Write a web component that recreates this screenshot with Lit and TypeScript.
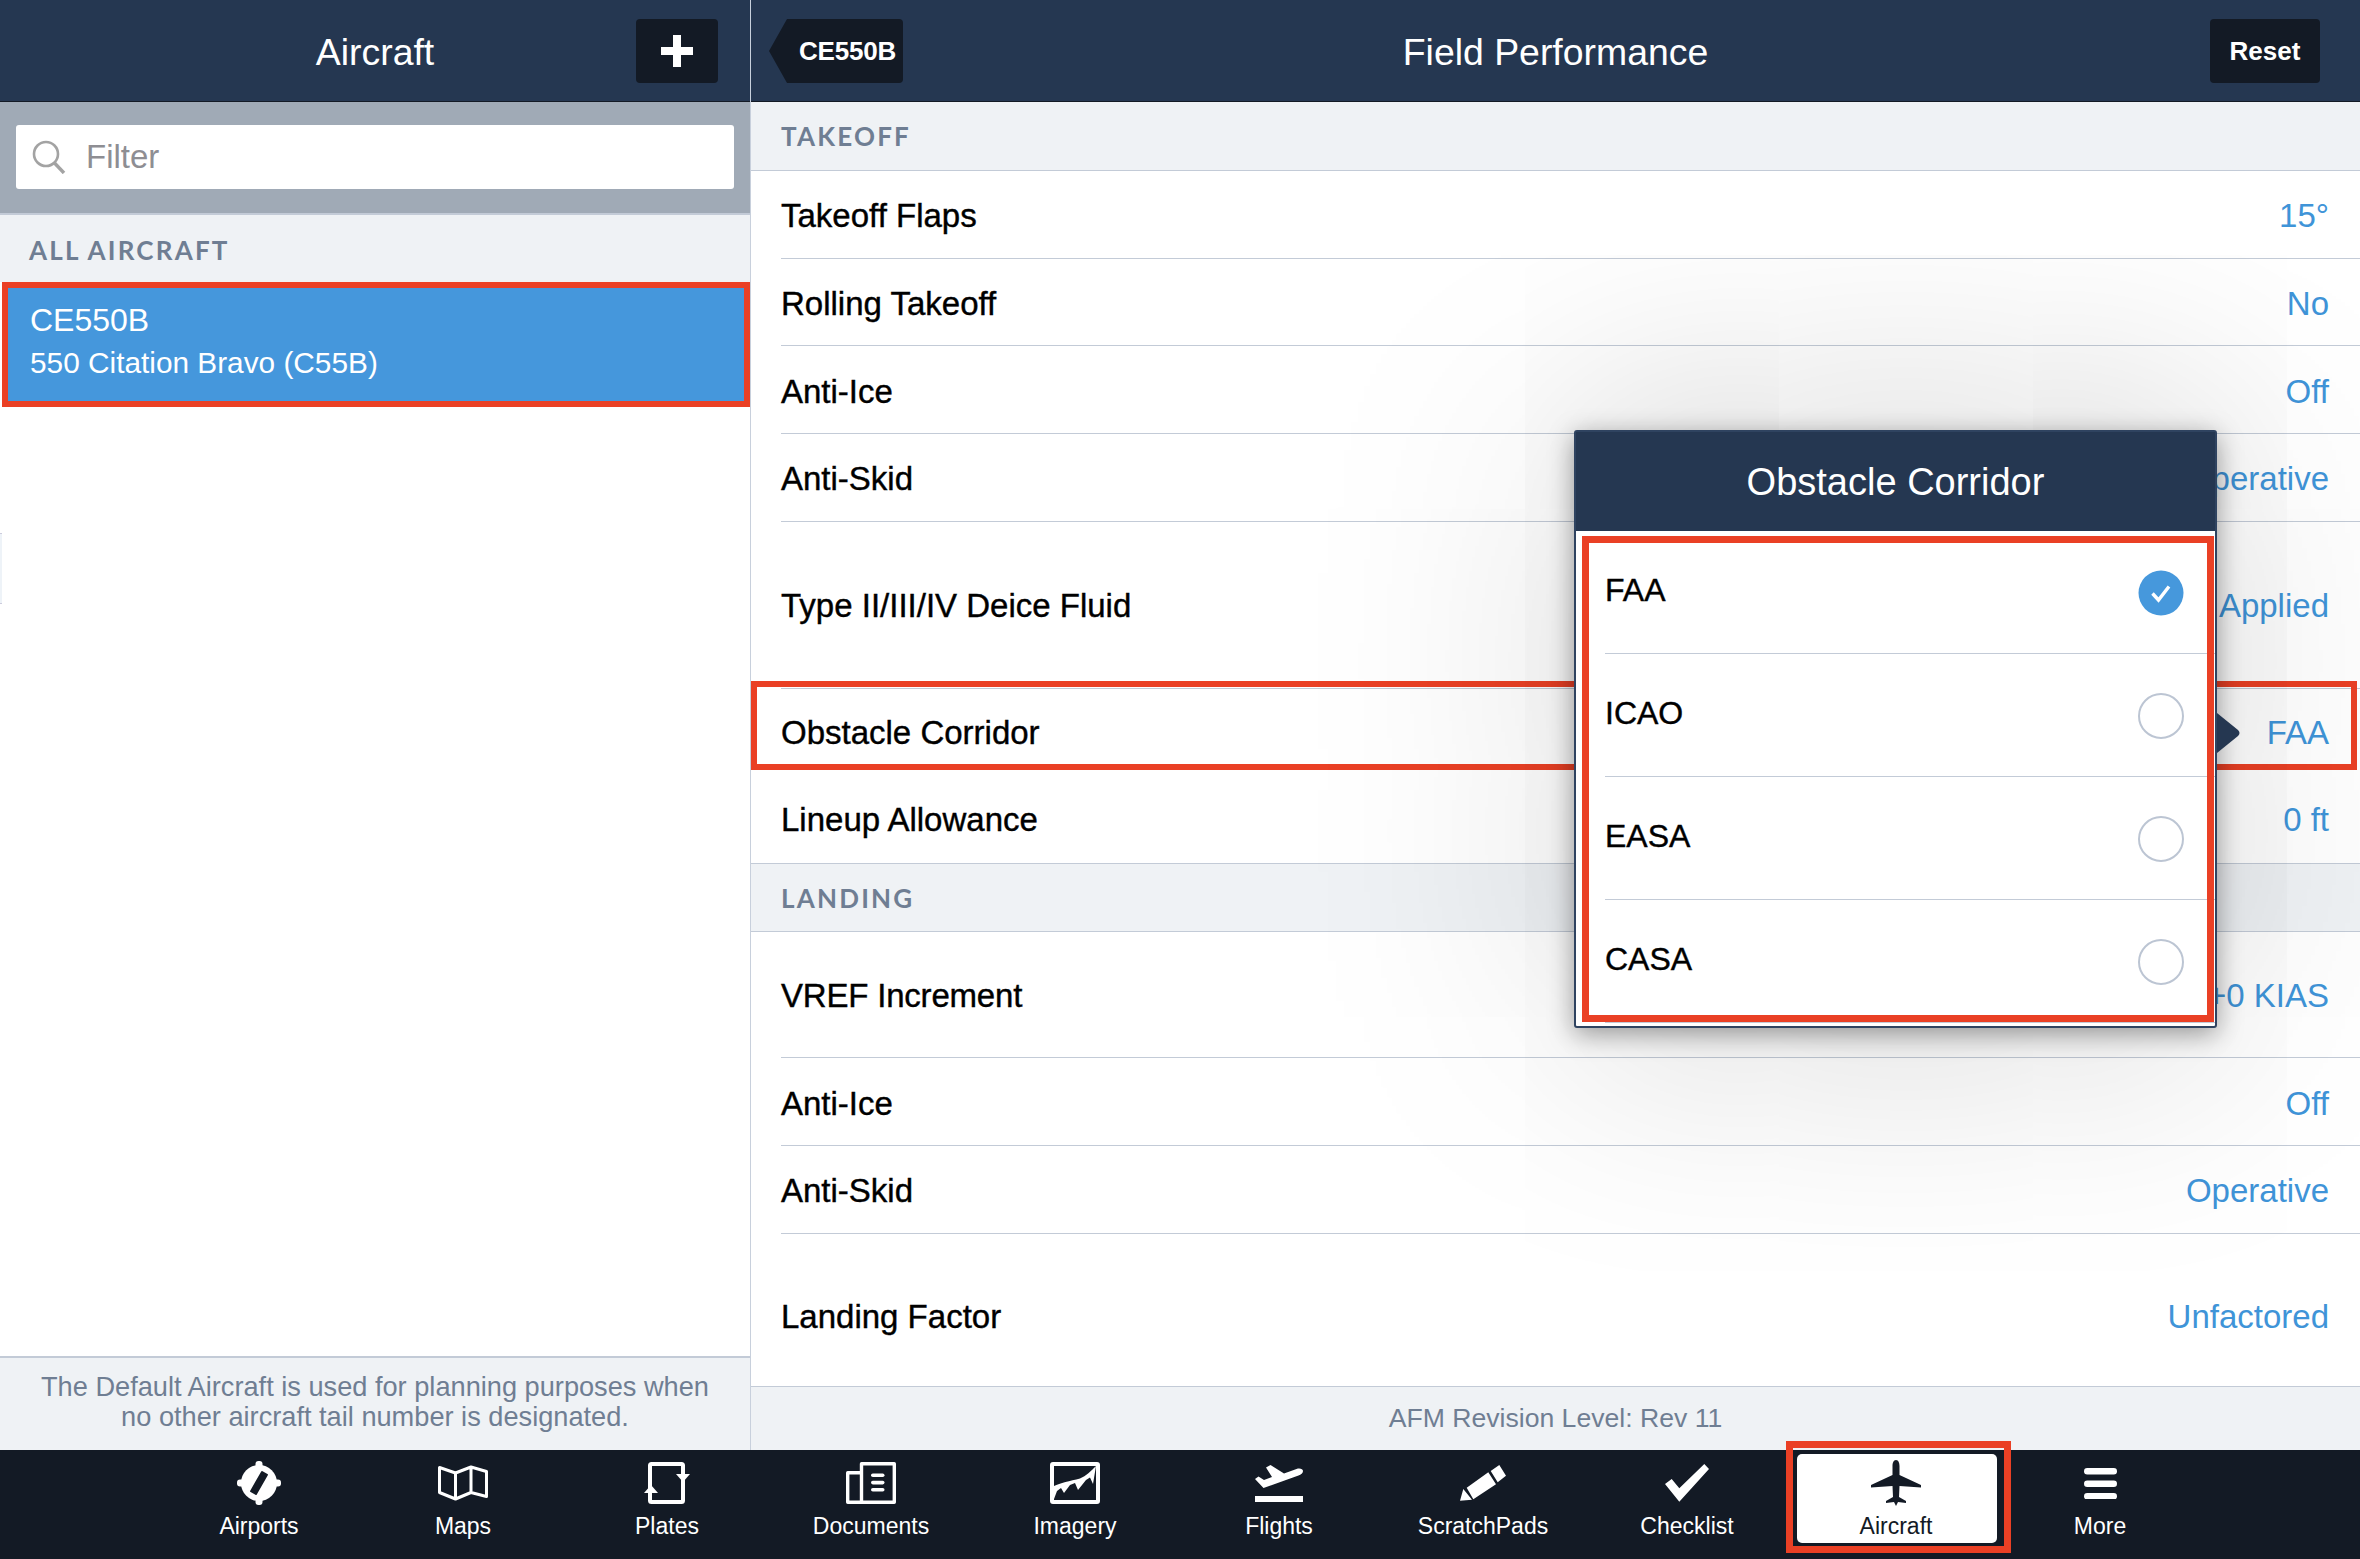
import { LitElement, html, css } from "lit";
import { customElement } from "lit/decorators.js";

const planePath =
  "M25 0C22.5 0 21.5 3 21.5 6L21.5 15L0 25L0 27.5L21.5 26L22 37L15 41L15 43L23 42L25 46L27 42L35 43L35 41L28 37L28.5 26L50 27.5L50 25L28.5 15L28.5 6C28.5 3 27.5 0 25 0Z";

const icons: Record<string, unknown> = {
  Airports: html`<svg width="44" height="44" viewBox="0 0 44 44"><circle cx="22" cy="22" r="18" fill="#fff"/><rect x="18.5" y="0" width="7" height="44" rx="3" fill="#fff"/><rect x="0" y="18.5" width="44" height="7" rx="3" fill="#fff"/><rect x="18.2" y="10" width="7.6" height="24" rx="1" fill="#131a25" transform="rotate(30 22 22)"/></svg>`,
  Maps: html`<svg width="50" height="36" viewBox="0 0 50 36"><path d="M1.5 2.5L17.5 8L33 2L48.5 6.5V31.5L33 27.5L17.5 34L1.5 27.5Z M17.5 8V34 M33 2V27.5" fill="none" stroke="#fff" stroke-width="3" stroke-linejoin="round"/></svg>`,
  Plates: html`<svg width="46" height="42" viewBox="0 0 46 42"><rect x="6" y="2" width="33" height="38" rx="1.5" fill="none" stroke="#fff" stroke-width="4"/><path d="M32 12H46L39 20Z M0 31H14L7 23Z" fill="#fff"/></svg>`,
  Documents: html`<svg width="50" height="42" viewBox="0 0 50 42"><path d="M15.5 1.7H48.3V40.3H15.5Z M15.5 10.7H1.7V40.3H15.5" fill="none" stroke="#fff" stroke-width="3.4" stroke-linejoin="round"/><rect x="25" y="11.5" width="13.5" height="3.6" rx="1.8" fill="#fff"/><rect x="25" y="18.8" width="13.5" height="3.6" rx="1.8" fill="#fff"/><rect x="25" y="26" width="13.5" height="3.6" rx="1.8" fill="#fff"/></svg>`,
  Imagery: html`<svg width="50" height="42" viewBox="0 0 50 42"><rect x="2" y="2" width="46" height="38" rx="1" fill="none" stroke="#fff" stroke-width="4"/><path d="M4 37V24C10 21 20 19 30 16.5C36 14 41 9 46 4L43 22L40 15.5L36 18L28 28L25 21L20 23L14 31L11 26L7 29Z" fill="#fff"/></svg>`,
  Flights: html`<svg width="48" height="37" viewBox="0 0 48 37"><path d="M0 14L3.5 11.5L9 15L17 12L11 2.5L15.5 0L29 8.5L41.5 4C45 3 48 4 48 6C48 8 46 9.5 43.5 10.5L8.5 23Z" fill="#fff"/><rect x="0" y="31" width="48" height="6" fill="#fff"/></svg>`,
  ScratchPads: html`<svg width="46" height="36" viewBox="0 0 46 36"><path d="M6.7 22.7L28.3 7.3L36 19.3L13.3 34.3Z M30.7 6L39.3 0L46 10.7L37.7 17.3Z M0 35.7L3.3 24L12 34.7Z" fill="#fff"/></svg>`,
  Checklist: html`<svg width="44" height="38" viewBox="0 0 44 38"><path d="M0 20L6.7 15L14.3 24.3L39.3 0L44 5L14.3 37.7Z" fill="#fff"/></svg>`,
  Aircraft: html`<svg width="50" height="46" viewBox="0 0 50 46"><path d="${planePath}" fill="#131a25"/></svg>`,
  More: html`<svg width="33" height="31" viewBox="0 0 33 31"><rect y="0" width="33" height="6.5" rx="3.25" fill="#fff"/><rect y="12.5" width="33" height="6.5" rx="3.25" fill="#fff"/><rect y="25" width="33" height="6.5" rx="3.25" fill="#fff"/></svg>`,
};

const tabs = ["Airports", "Maps", "Plates", "Documents", "Imagery", "Flights", "ScratchPads", "Checklist", "Aircraft", "More"];

type Item =
  | { k: "section"; t: string; first?: boolean }
  | { k: "row"; l: string; v: string; h?: string; none?: boolean };

const rows: Item[] = [
  { k: "section", t: "TAKEOFF", first: true },
  { k: "row", l: "Takeoff Flaps", v: "15°" },
  { k: "row", l: "Rolling Takeoff", v: "No" },
  { k: "row", l: "Anti-Ice", v: "Off" },
  { k: "row", l: "Anti-Skid", v: "Operative" },
  { k: "row", l: "Type II/III/IV Deice Fluid", v: "Not Applied", h: "tall" },
  { k: "row", l: "Obstacle Corridor", v: "FAA", h: "obstacle", none: true },
  { k: "row", l: "Lineup Allowance", v: "0 ft", h: "lineup", none: true },
  { k: "section", t: "LANDING" },
  { k: "row", l: "VREF Increment", v: "+0 KIAS", h: "vref" },
  { k: "row", l: "Anti-Ice", v: "Off" },
  { k: "row", l: "Anti-Skid", v: "Operative" },
  { k: "row", l: "Landing Factor", v: "Unfactored", h: "last", none: true },
];

@customElement("app-root")
export class AppRoot extends LitElement {
  static styles = css`
    :host {
      display: block;
      width: 2360px;
      height: 1559px;
      overflow: hidden;
      font-family: "Liberation Sans", Arial, sans-serif;
      background: #fff;
      position: relative;
      color: #000;
    }
    .main { display: flex; height: 1450px; }
    .left {
      width: 751px;
      flex: none;
      box-sizing: border-box;
      border-right: 1px solid #c8d0dc;
      display: flex;
      flex-direction: column;
      position: relative;
    }
    .right { flex: 1; min-width: 0; display: flex; flex-direction: column; }
    .bar {
      height: 102px;
      flex: none;
      box-sizing: border-box;
      background: #253751;
      border-bottom: 1px solid #131a25;
      display: flex;
      align-items: center;
      position: relative;
      color: #fff;
      font-size: 37.4px;
    }
    .bar-title { position: absolute; left: 0; right: 0; top: 0; bottom: 0; display: flex; align-items: center; justify-content: center; padding-top: 3px; box-sizing: border-box; }
    .left .bar { padding-left: 636px; }
    .plus {
      width: 82px; height: 64px; border-radius: 4px; background: #131a25;
      display: flex; align-items: center; justify-content: center; position: relative;
    }
    .search {
      height: 111px; flex: none; box-sizing: border-box; background: #a0aab6;
      padding: 23px 16px 24px;
    }
    .search-box {
      height: 64px; background: #fff; border-radius: 3px; display: flex;
      align-items: center; padding-left: 16px; gap: 20px;
      color: #8e8e93; font-size: 33px;
    }
    .sec {
      font-family: Lato, "Liberation Sans", sans-serif;
      font-weight: 700;
      font-size: 26px;
      letter-spacing: 2.2px;
      color: #6f7e93;
      background: #eff2f5;
      box-sizing: border-box;
      display: flex;
      align-items: center;
      padding-left: 30px;
      flex: none;
    }
    .sec.all { height: 69px; border-top: 2px solid #c3cbd7; padding-left: 29px; padding-top: 2px; }
    .item {
      height: 125px; flex: none; box-sizing: border-box; margin-left: 2px;
      border: 6px solid #ea4025; background: #4597dc; color: #fff;
      padding: 13px 0 0 22px;
    }
    .item-a { font-size: 32px; line-height: 38px; }
    .item-b { font-size: 29.8px; line-height: 34px; margin-top: 7px; }
    .spacer { flex: 1; }
    .note {
      height: 94px; flex: none; box-sizing: border-box; background: #eff2f5;
      border-top: 2px solid #c3cbd7; text-align: center; color: #6f7e93;
      font-size: 27.2px; line-height: 30px; padding-top: 14px;
    }
    .edge {
      position: absolute; left: 0; top: 533px; width: 2px; height: 69px;
      background: #eef3f8; border-top: 1px solid #ccd; border-bottom: 1px solid #ccd;
    }
    .back {
      position: absolute; left: 18px; top: 19px; width: 134px; height: 64px;
      display: flex; align-items: center;
    }
    .back svg { position: absolute; left: 0; top: 0; }
    .back span { position: relative; margin-left: 30px; font-size: 26px; font-weight: 700; letter-spacing: -.2px; padding-top: 1px; }
    .reset {
      position: absolute; right: 40px; top: 19px; width: 110px; height: 64px; border-radius: 4px;
      background: #131a25; display: flex; align-items: center; justify-content: center;
      font-size: 26px; font-weight: 700; padding-top: 1px; box-sizing: border-box;
    }
    .body { flex: 1; min-height: 0; position: relative; overflow: hidden; display: flex; flex-direction: column; }
    .rsec { height: 69px; border-top: 1px solid #c3cbd7; border-bottom: 1px solid #c3cbd7; }
    .rsec.first { border-top: 0; }
    .row {
      height: 87.67px; flex: none; box-sizing: border-box; margin-left: 30px; padding: 4px 31px 0 0;
      display: flex; align-items: center; justify-content: space-between;
      border-bottom: 1px solid #c3cbd7; font-size: 33px;
    }
    .row.tall { height: 167px; padding-top: 3px; }
    .row.obstacle { height: 87px; padding-top: 1px; }
    .row.lineup { padding-top: 1px; }
    .row.vref { height: 126px; padding-top: 3px; }
    .row.vref .label { letter-spacing: -.2px; }
    .row.last { flex: 1; padding-top: 15px; }
    .row.none { border-bottom: 0; }
    .label { -webkit-text-stroke: .4px #000; }
    .val { color: #3f94d8; }
    .rfoot {
      height: 64px; flex: none; box-sizing: border-box; background: #eff2f5;
      border-top: 1px solid #c3cbd7; color: #6f7e93; font-size: 26.6px;
      display: flex; align-items: center; justify-content: center;
    }
    .mark { position: absolute; left: 0; top: 579px; width: 1606px; height: 89px; box-sizing: border-box; border: 6px solid #ea4025; }
    .pop {
      position: absolute; left: 823px; top: 328px; width: 643px; height: 598px; box-sizing: border-box;
      background: #fff; border: 2px solid #2f4360; border-radius: 3px;
      box-shadow: 0 6px 26px rgba(0,0,0,.38), 0 0 560px rgba(0,0,0,.22);
      display: flex; flex-direction: column;
    }
    .pop-head {
      height: 99px; flex: none; background: #253751; color: #fff; font-size: 38px;
      display: flex; align-items: center; justify-content: center;
      padding-top: 1px; box-sizing: border-box;
    }
    .opt {
      height: 123px; flex: none; box-sizing: border-box; margin-left: 29px; padding-right: 31px;
      display: flex; align-items: center; justify-content: space-between;
      border-bottom: 1px solid #c3cbd7; font-size: 32px;
    }
    .opt:last-of-type { border-bottom: 0; }
    .opt .label { margin-bottom: 4px; }
    .opt svg { margin-top: 2px; display: block; }
    .pop-mark {
      position: absolute; left: 6px; top: 104px; width: 632px; height: 486px; box-sizing: border-box;
      border: 7px solid #ea4025;
    }
    .arrow { position: absolute; left: 1466px; top: 611px; }
    .tabs {
      height: 109px; background: #131a25; display: flex; padding-left: 157px; box-sizing: border-box;
      position: relative;
    }
    .tab {
      width: 204px; flex: none; display: flex; flex-direction: column; align-items: center;
      padding-top: 10px; box-sizing: border-box; color: #fff; font-size: 23px; position: relative;
    }
    .tab-ic { height: 46px; display: flex; align-items: center; justify-content: center; position: relative; }
    .tab-ic svg { display: block; }
    .tab-l { line-height: 28px; margin-top: 6px; position: relative; }
    .tab.on { margin-left: 5px; color: #131a25; }
    .tab.on::before {
      content: ""; position: absolute; left: 3px; top: 4px; width: 200px; height: 89px;
      background: #fff; border-radius: 5px;
    }
    .tab.on::after {
      content: ""; position: absolute; left: -8px; top: -9px; width: 225px; height: 112px;
      box-sizing: border-box; border: 7px solid #ea4025;
    }
  `;

  private radio(on: boolean) {
    return on
      ? html`<svg width="46" height="46" viewBox="0 0 46 46"><circle cx="23" cy="23" r="22.5" fill="#4698dc"/><path d="M14.5 23.5L20.5 30L31 16.5" fill="none" stroke="#fff" stroke-width="3.4"/></svg>`
      : html`<svg width="46" height="46" viewBox="0 0 46 46"><circle cx="23" cy="23" r="22" fill="none" stroke="#bcc5d3" stroke-width="2"/></svg>`;
  }

  render() {
    return html`
      <div class="main">
        <div class="left">
          <div class="bar">
            <div class="bar-title">Aircraft</div>
            <div class="plus">
              <svg width="32" height="32" viewBox="0 0 32 32"><path d="M12 0h8v12h12v8H20v12h-8V20H0v-8h12z" fill="#fff"/></svg>
            </div>
          </div>
          <div class="search">
            <div class="search-box">
              <svg width="34" height="34" viewBox="0 0 34 34" style="flex:none">
                <circle cx="14" cy="14" r="12" fill="none" stroke="#a3a3a3" stroke-width="2.6"/>
                <path d="M22.5 23L32 33" stroke="#a3a3a3" stroke-width="3.4" fill="none"/>
              </svg>
              <span>Filter</span>
            </div>
          </div>
          <div class="sec all">ALL AIRCRAFT</div>
          <div class="item">
            <div class="item-a">CE550B</div>
            <div class="item-b">550 Citation Bravo (C55B)</div>
          </div>
          <div class="spacer"></div>
          <div class="note">The Default Aircraft is used for planning purposes when<br />no other aircraft tail number is designated.</div>
          <div class="edge"></div>
        </div>
        <div class="right">
          <div class="bar">
            <div class="bar-title">Field Performance</div>
            <div class="back">
              <svg width="134" height="64" viewBox="0 0 134 64"><path d="M18 0H130a4 4 0 0 1 4 4V60a4 4 0 0 1-4 4H18L0 32Z" fill="#131a25"/></svg>
              <span>CE550B</span>
            </div>
            <div class="reset">Reset</div>
          </div>
          <div class="body">
            ${rows.map((r) =>
              r.k === "section"
                ? html`<div class="sec rsec ${r.first ? "first" : ""}">${r.t}</div>`
                : html`<div class="row ${r.h ?? ""} ${r.none ? "none" : ""}">
                    <span class="label">${r.l}</span><span class="val">${r.v}</span>
                  </div>`
            )}
            <div class="rfoot">AFM Revision Level: Rev 11</div>
            <div class="mark"></div>
            <div class="pop">
              <div class="pop-head">Obstacle Corridor</div>
              ${["FAA", "ICAO", "EASA", "CASA"].map(
                (o, i) => html`<div class="opt"><span class="label">${o}</span>${this.radio(i === 0)}</div>`
              )}
              <div class="pop-mark"></div>
            </div>
            <svg class="arrow" width="26" height="40" viewBox="0 0 26 40"><path d="M0 0L21 17Q24 20 21 23L0 40Z" fill="#253751"/></svg>
          </div>
        </div>
      </div>
      <div class="tabs">
        ${tabs.map(
          (t) => html`<div class="tab ${t === "Aircraft" ? "on" : ""}">
            <div class="tab-ic">${icons[t]}</div>
            <div class="tab-l">${t}</div>
          </div>`
        )}
      </div>
    `;
  }
}
